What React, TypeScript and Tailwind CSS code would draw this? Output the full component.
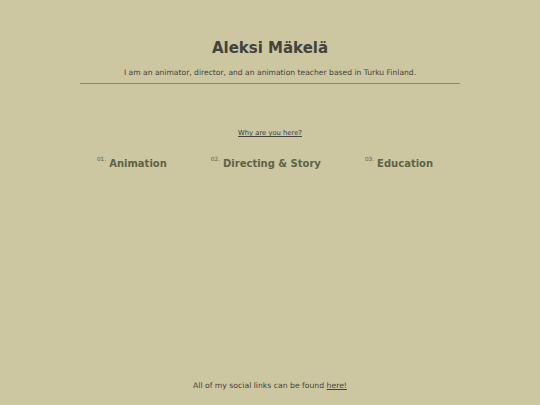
export default function App() {
  const sections = [
    { num: "01.", title: "Animation" },
    { num: "02.", title: "Directing & Story" },
    { num: "03.", title: "Education" },
  ];

  return (
    <div
      className="min-h-[405px] w-full bg-[#ccc6a1] text-[#43433d] flex flex-col items-center"
      style={{ fontFamily: '"DejaVu Sans", Verdana, sans-serif' }}
    >
      <header className="w-[380px] flex flex-col items-center pt-[39px]">
        <h1 className="text-[15px] font-bold leading-[18px]">Aleksi Mäkelä</h1>
        <p className="text-[7.6px] leading-[9px] mt-[11px]">
          I am an animator, director, and an animation teacher based in Turku Finland.
        </p>
        <div className="w-full h-px bg-[#8b8772] mt-[6px]" />
      </header>

      <a href="#" className="text-[6.8px] underline mt-[45px] leading-[8px]">
        Why are you here?
      </a>

      <nav className="flex justify-center gap-[44px] mt-[19px] mr-[10px]">
        {sections.map((s) => (
          <div key={s.num} className="flex items-start">
            <span className="text-[5.8px] text-[#5d5f52] mr-[3px] leading-[7px]">{s.num}</span>
            <span className="text-[10px] font-bold text-[#5c6448] leading-[12px] mt-[2px]">
              {s.title}
            </span>
          </div>
        ))}
      </nav>

      <footer className="mt-auto pb-[15px] text-[7.7px] leading-[9px]">
        All of my social links can be found <a href="#" className="underline">here!</a>
      </footer>
    </div>
  );
}
